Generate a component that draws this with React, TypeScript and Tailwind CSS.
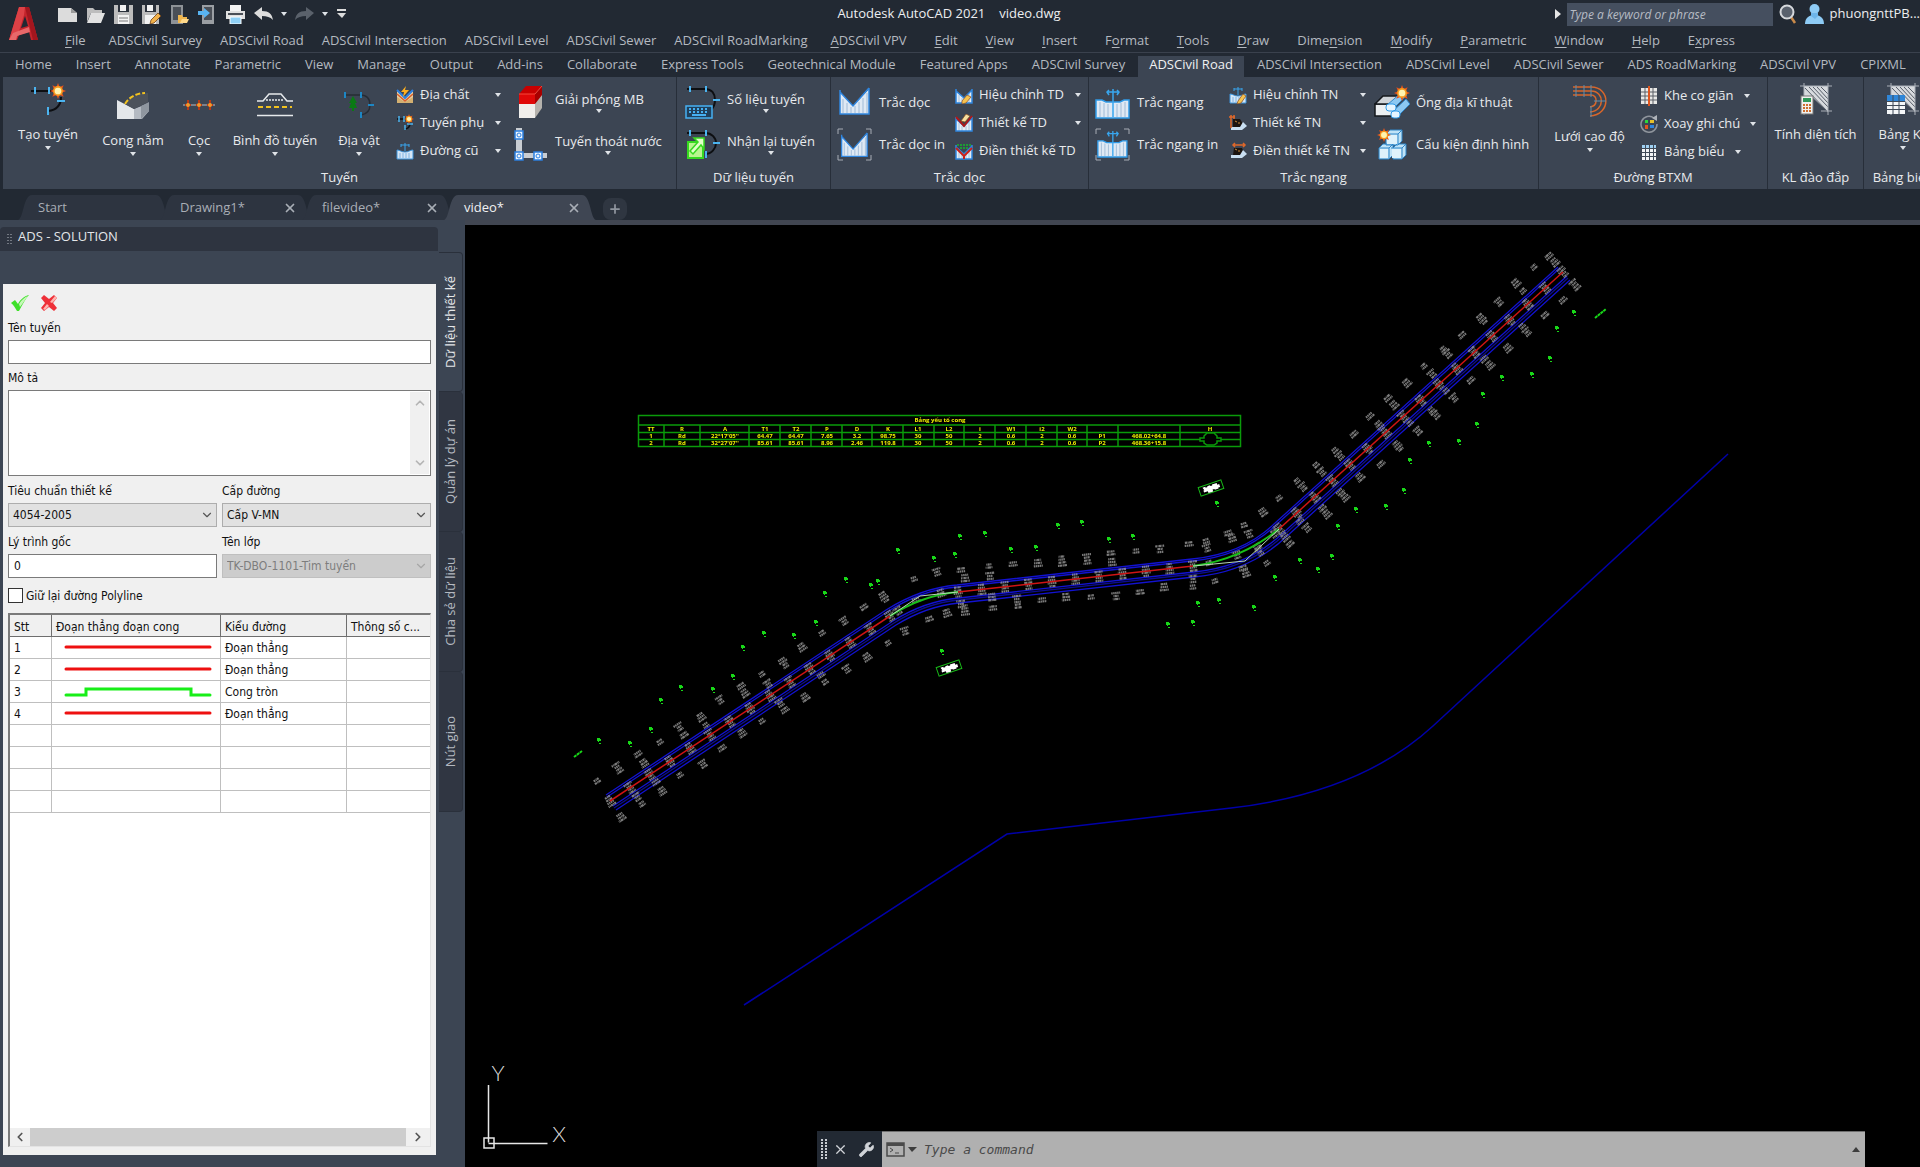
import type { ReactNode } from 'react';
import { ChevronDown, ChevronUp, ChevronLeft, ChevronRight, Plus, Wrench, X } from 'lucide-react';

const MENUS = [
  '&File', 'ADSCivil Survey', 'ADSCivil Road', 'ADSCivil Intersection', 'ADSCivil Level', 'ADSCivil Sewer',
  'ADSCivil RoadMarking', '&ADSCivil VPV', '&Edit', '&View', '&Insert', 'F&ormat', '&Tools', '&Draw',
  'Dime&nsion', '&Modify', '&Parametric', '&Window', '&Help', 'E&xpress',
];

const TABS = [
  'Home', 'Insert', 'Annotate', 'Parametric', 'View', 'Manage', 'Output', 'Add-ins', 'Collaborate',
  'Express Tools', 'Geotechnical Module', 'Featured Apps', 'ADSCivil Survey', 'ADSCivil Road',
  'ADSCivil Intersection', 'ADSCivil Level', 'ADSCivil Sewer', 'ADS RoadMarking', 'ADSCivil VPV', 'CPIXML',
];

const FILES = ['Start', 'Drawing1*', 'filevideo*', 'video*'];
const SIDE_TABS = ['Dữ liệu thiết kế', 'Quản lý dự án', 'Chia sẻ dữ liệu', 'Nút giao'];

const SEGMENTS = [
  { id: '1', type: 'Đoạn thẳng', curve: false },
  { id: '2', type: 'Đoạn thẳng', curve: false },
  { id: '3', type: 'Cong tròn', curve: true },
  { id: '4', type: 'Đoạn thẳng', curve: false },
];

/* ---------- icons ---------- */

function Svg({ w, h, children }: { w: number; h: number; children: ReactNode }) {
  return (
    <svg width={w} height={h} viewBox={`0 0 ${w} ${h}`} fill="none" className="shrink-0" aria-hidden="true">
      {children}
    </svg>
  );
}

function Sun({ x, y, r }: { x: number; y: number; r: number }) {
  const rays = [0, 45, 90, 135, 180, 225, 270, 315];
  return (
    <g transform={`translate(${x} ${y})`}>
      {rays.map((a) => (
        <path key={a} d={`M${-r * 0.4} 0L0 ${-r}L${r * 0.4} 0z`} fill="#e8541c" transform={`rotate(${a})`} />
      ))}
      <circle r={r * 0.62} fill="#f59a1c" />
      <circle r={r * 0.42} fill="#fff3b0" />
    </g>
  );
}

function Arrow({ className = '' }: { className?: string }) {
  return (
    <svg width="6" height="4" viewBox="0 0 6 4" className={`shrink-0 ${className}`} aria-hidden="true">
      <path d="M0 0h6L3 4z" fill="#dfe3e8" />
    </svg>
  );
}

function AlignIcon() {
  return (
    <Svg w={36} h={34}>
      <path d="M1 9h22M31 15c0 8-4 13-13 14" stroke="#0d0f12" strokeWidth="2" />
      <path d="M5 5v7M19 5v7M18 25v8M27 19h8" stroke="#4bb4f0" strokeWidth="2" />
      <Sun x={28} y={9} r={8} />
    </Svg>
  );
}

function CurveIcon() {
  return (
    <Svg w={34} h={28}>
      <path d="M1 9l17 9v10H1z" fill="#e4e7ea" />
      <path d="M18 18L33 12v8l-7 8h-8z" fill="#b4bac2" />
      <path d="M25 28V15l8-4v9z" fill="#8f969f" />
      <path d="M9 13C14 6 24 2 32 2v9l-14 7z" fill="#4c525b" />
      <path d="M9 13C13 6 21 2 29 2" stroke="#f2c21f" strokeWidth="2" strokeDasharray="5 2" />
    </Svg>
  );
}

function StakeIcon() {
  return (
    <Svg w={34} h={12}>
      <path d="M1 6h32" stroke="#b9bdc4" />
      {[6, 17, 28].map((x) => (
        <g key={x}>
          <path d={`M${x} 1v10M${x - 3} 6h6`} stroke="#b83a18" strokeWidth="2" />
          <circle cx={x} cy={6} r={2} fill="#f29a2c" />
        </g>
      ))}
    </Svg>
  );
}

function PlanIcon() {
  return (
    <Svg w={38} h={24}>
      <path d="M1 8h6l6-7h12l6 7h6M1 22.500h36" stroke="#e6e9ec" strokeWidth="1.500" />
      <path d="M10 7h18" stroke="#e6e9ec" strokeWidth="1.500" strokeDasharray="2 1" />
      <path d="M2 14h34" stroke="#f2c21f" strokeWidth="2" strokeDasharray="5 3" />
    </Svg>
  );
}

function FeatureIcon() {
  return (
    <Svg w={34} h={28}>
      <path d="M2 4h16c8 0 10 5 10 10 0 6-3 9-9 10" stroke="#262c35" strokeWidth="1.500" />
      <path d="M3 1v6M19 1v6M26 14h6M19 21v6" stroke="#1d86c4" strokeWidth="2" />
      <path d="M11 5l4 7h-2l2 5h-3v3h-2v-3H7l2-5H7z" fill="#0a7a14" />
    </Svg>
  );
}

function GeoIcon() {
  return (
    <Svg w={18} h={18}>
      <path d="M1 5l8 7 8-7v12H1z" fill="#e6d3a6" />
      <path d="M1 11l8 5 8-5v6H1z" fill="#d3b071" />
      <path d="M1 4l8 8 8-8" stroke="#2d7fe0" strokeWidth="2" />
      <path d="M1 8l8 7 8-7" stroke="#d85c2a" strokeWidth="1.500" />
      <path d="M10 0L5 6h3l-1 5 6-7h-4z" fill="#ffb01f" />
    </Svg>
  );
}

function SubRouteIcon() {
  return (
    <Svg w={18} h={18}>
      <path d="M1 5h9M14 9c0 4-2 6-6 6" stroke="#0d0f12" strokeWidth="1.500" />
      <path d="M3 2v6M8 2v6M9 11v5M11 10h6" stroke="#4bb4f0" strokeWidth="1.500" />
      <Sun x={13} y={5} r={5} />
    </Svg>
  );
}

function Section({ pencil = false }: { pencil?: boolean }) {
  return (
    <Svg w={18} h={18}>
      <path d="M1 8c3 0 4 2 8 2s5-2 8-2v9H1z" fill="#d5e6f6" stroke="#3d95dc" />
      <path d="M4 11v5M7 11v5M10 11v5M13 11v5" stroke="#7fb4e4" />
      <path d="M9 1v8M5 3h8M5 2v3M13 2v3" stroke="#38a6ee" />
      {pencil && <path d="M9 15l5-7 3 2-5 7-4 1z" fill="#f6c350" stroke="#8a4b1c" strokeWidth=".7" />}
    </Svg>
  );
}

function ClearIcon() {
  return (
    <Svg w={26} h={34}>
      <path d="M1 18h16v15H1z" fill="#f0eeeb" />
      <path d="M17 18l7-9v14l-7 10z" fill="#b5b2ad" />
      <path d="M1 9h16v10H1z" fill="#e00808" />
      <path d="M1 9l7-8h16l-7 8z" fill="#c80000" />
      <path d="M17 9l7-8v9l-7 9z" fill="#a80000" />
      <path d="M1 9h16l7-8" stroke="#ff5a4a" strokeWidth=".8" />
    </Svg>
  );
}

function DrainIcon() {
  return (
    <Svg w={34} h={34}>
      <path d="M2 1h6v26H2z" fill="#c9cdd2" />
      <path d="M6 26h27v5H6z" fill="#c9cdd2" />
      {[[1, 4], [1, 25], [20, 25]].map(([x, y]) => (
        <g key={`${x}-${y}`}>
          <rect x={x} y={y} width="8" height="8" fill="#eef6ff" stroke="#2b7fe0" strokeWidth="1.500" />
          <circle cx={x + 4} cy={y + 4} r="2" stroke="#2b7fe0" />
        </g>
      ))}
    </Svg>
  );
}

function DataIcon() {
  return (
    <Svg w={36} h={34}>
      <path d="M2 4h18c7 0 10 5 10 11 0 5-2 8-4 10" stroke="#0d0f12" strokeWidth="2" />
      <path d="M5 1v6M21 1v6M28 15h7" stroke="#4bb4f0" strokeWidth="2" />
      <rect x="1" y="21" width="26" height="12" fill="#20405c" stroke="#46b0f2" strokeWidth="1.500" />
      <path d="M4 24h20M4 27h20" stroke="#46b0f2" strokeWidth="2" strokeDasharray="2 2" />
      <path d="M7 30h14" stroke="#46b0f2" strokeWidth="2" />
    </Svg>
  );
}

function GetBackIcon() {
  return (
    <Svg w={36} h={32}>
      <path d="M2 5h18c7 0 11 5 11 10s-4 11-11 11" stroke="#0d0f12" strokeWidth="2" />
      <path d="M5 2v6M21 2v6M28 15h7M21 23v7" stroke="#4bb4f0" strokeWidth="2" />
      <path d="M3 14h15v16H3z" fill="#b9f58f" stroke="#36d820" strokeWidth="2" />
      <path d="M9 10h10v11l-3-4-8 9-3-3 8-9z" fill="#e2ffc8" stroke="#36d820" strokeWidth="1.500" />
    </Svg>
  );
}

function ProfileShape({ top }: { top: number }) {
  return (
    <>
      <path d={`M3 ${top + 4}l13 14 16-17v25H3z`} fill="#dfe9f4" />
      <path d="M6 12v14M10 16v10M14 20v6M18 19v7M22 15v11M26 11v15M30 6v20" stroke="#9fbad6" />
      <path d={`M3 ${top + 2}v24h29V${top}M3 ${top + 4}l13 14L32 ${top}`} stroke="#2f86e0" strokeWidth="1.500" />
    </>
  );
}

function Corners() {
  return <path d="M1 6V1h5M29 1h5v5M34 27v5h-5M6 32H1v-5" stroke="#a7adb6" />;
}

function ProfileIcon({ framed = false }: { framed?: boolean }) {
  return (
    <Svg w={36} h={33}>
      <g transform={framed ? 'translate(2 4) scale(.88 .9)' : 'translate(0 1)'}>
        <ProfileShape top={1} />
      </g>
      {framed && <Corners />}
    </Svg>
  );
}

function CrossIcon({ framed = false }: { framed?: boolean }) {
  return (
    <Svg w={36} h={33}>
      <g transform={framed ? 'translate(2 2) scale(.88 .9)' : 'translate(0 2)'}>
        <path d="M1 12h6l4 2h14l4-2h5v18H1z" fill="#dfe9f4" />
        <path d="M5 14v15M9 15v14M13 16v13M22 16v13M26 15v14M30 14v15" stroke="#9fbad6" />
        <path d="M1 12h6l4 2h14l4-2h5v18H1z" stroke="#2f9ae8" strokeWidth="1.500" />
        <path d="M18 1v28M12 4h12M14 2l-2 2 2 3M22 2l2 2-2 3" stroke="#38a6ee" strokeWidth="1.500" />
      </g>
      {framed && <Corners />}
    </Svg>
  );
}

function SmallProfile({ kind }: { kind: 'edit' | 'design' | 'fill' }) {
  return (
    <Svg w={18} h={18}>
      <path d="M1 5l8 7 8-8v13H1z" fill="#e4edf6" />
      <path d="M4 9v8M7 12v5M11 12v5M14 8v9" stroke="#a9c0d8" />
      <path d="M1 3v14h16V3M1 5l8 7 8-8" stroke="#2f86e0" strokeWidth="1.500" />
      {kind === 'edit' && <path d="M7 15l5-6 4 2-5 6-4 1z" fill="#f6c350" stroke="#8a4b1c" strokeWidth=".7" />}
      {kind === 'design' && (
        <>
          <path d="M1 3l8 9 8-10" stroke="#b01818" strokeWidth="2" />
          <path d="M6 7l5-7 4 2-5 6z" fill="#f6e0a0" stroke="#8a4b1c" strokeWidth=".7" />
        </>
      )}
      {kind === 'fill' && (
        <>
          <path d="M1 6l8 8 8-8M9 14v3" stroke="#c8201a" strokeWidth="2" />
          <path d="M2 3h14M5 6h8" stroke="#1d9a35" strokeWidth="2" strokeDasharray="2 1" />
        </>
      )}
    </Svg>
  );
}

function SmallCross({ fill = false }: { fill?: boolean }) {
  return (
    <Svg w={18} h={18}>
      <path d={fill ? 'M5 6h8l2 5-3 2H4z' : 'M4 5h7l3 5-2 3H4z'} fill="#1b1410" />
      <path d="M6 7l2 1M9 9h2" stroke="#c98a3c" />
      <path d="M2 13h9l3-5 4 4-5 4H2z" fill="#c9dff2" />
      {fill ? (
        <path d="M4 3h12M6 1L4 3l2 2M14 1l2 2-2 2" stroke="#e0682a" strokeWidth="1.500" />
      ) : (
        <path d="M2 1v13M0 3h6M5 1v4" stroke="#e0682a" strokeWidth="1.500" />
      )}
    </Svg>
  );
}

function DuctIcon() {
  return (
    <Svg w={36} h={34}>
      <path d="M1 19h18v12H1z" fill="#eceff1" stroke="#15181c" strokeWidth="1.500" />
      <path d="M1 19l8-8h18l-8 8z" fill="#d0d4d8" stroke="#15181c" strokeWidth="1.500" />
      <path d="M13 20l14-12 6 2-13 13zM18 27l14-13 4 5-12 12z" fill="#8cc8f2" stroke="#2f86c8" />
      <rect x="12" y="19" width="10" height="7" rx="3" fill="#e4f4ff" stroke="#2f9ae8" />
      <rect x="17" y="26" width="9" height="7" rx="3" fill="#e4f4ff" stroke="#2f9ae8" />
      <Sun x={28} y={8} r={8} />
    </Svg>
  );
}

function BlocksIcon() {
  return (
    <Svg w={30} h={34}>
      <g stroke="#2f86c8" fill="#bfe3f7">
        <path d="M9 7l4-4h12v11l-4 4H9zM2 21l4-4h10v11l-4 4H2zM16 21l4-4h9v11l-4 4h-9z" />
        <path d="M9 7h12v11M21 7l4-4M2 21h10v11M12 21l4-4M14 21h11v11M25 21l4-4" />
      </g>
      <path d="M10 8h10v9H10zM3 22h8v9H3zM15 22h9v9h-9z" fill="#dff2fb" />
      <Sun x={7} y={8} r={7} />
    </Svg>
  );
}

function GridHeightIcon() {
  return (
    <Svg w={36} h={32}>
      <path
        d="M1 2h18c20 0 20 28-1 29M1 6h18c14 0 14 20-1 21M1 10h18c7 0 7 11-1 12"
        stroke="#d9662a"
        strokeWidth="1.500"
      />
      <path d="M4 0v12M12 0v12M19 0v12M22 16h12M19 21v11" stroke="#5d8fb0" />
    </Svg>
  );
}

function JointIcon() {
  return (
    <Svg w={18} h={20}>
      <path d="M1 2h16v16H1z" fill="#e8e8e6" />
      <path d="M1 6h16M1 10h16M1 14h16M5 2v16M13 2v16" stroke="#5b5f66" />
      <path d="M9 0v20" stroke="#e0561e" strokeWidth="2" />
    </Svg>
  );
}

function RotateIcon() {
  return (
    <Svg w={18} h={18}>
      <path d="M14 3a8 8 0 1 0 3 6" stroke="#8f959d" strokeWidth="1.500" />
      <path d="M12 3l5-3v6z" fill="#aeb3ba" />
      <path d="M5 5h3v3H5z" fill="#2ad83a" />
      <path d="M10 5h4v3h-4z" fill="#e6c12a" />
      <path d="M5 10h3v4H5z" fill="#e0561e" />
      <path d="M10 10h4v3h-4z" fill="#2f86e0" />
    </Svg>
  );
}

function TableIcon() {
  return (
    <Svg w={18} h={18}>
      <path d="M2 2h14v15H2z" fill="#f2f4f6" />
      <path d="M2 2h14v3H2z" fill="#9fd0f2" />
      <path d="M2 5.500h14M2 9.500h14M2 13.500h14M5.500 2v15M9.500 2v15M13.500 2v15" stroke="#3f4a58" />
    </Svg>
  );
}

function AreaIcon({ table = false }: { table?: boolean }) {
  return (
    <Svg w={34} h={34}>
      <path d="M5 4h24v26L12 14H5z" fill="#d7dade" />
      <path d="M6 6l22 23M10 5l19 20M14 5l15 16M18 5l11 12M22 5l7 7" stroke="#565d68" />
      <path d="M1 4h32M5 1v32M29 1v32M22 29h11" stroke="#aab0b8" />
      {table ? (
        <>
          <rect x="1" y="13" width="18" height="19" fill="#f4f6f8" />
          <rect x="1" y="13" width="18" height="6" fill="#2f86d8" />
          <path d="M1 19.500h18M1 23.500h18M1 27.500h18M7 13v19M13 13v19" stroke="#3f4a58" />
        </>
      ) : (
        <>
          <rect x="2" y="14" width="12" height="18" fill="#f1f1ef" stroke="#777" />
          <rect x="4" y="16" width="8" height="4" fill="#2f9a5a" />
          <path d="M4 23h8M4 26h8M4 29h8" stroke="#d07030" strokeWidth="2" strokeDasharray="2 1" />
        </>
      )}
    </Svg>
  );
}

function LogoA() {
  return (
    <svg width="32" height="36" viewBox="0 0 32 36" className="shrink-0" aria-hidden="true">
      <path fillRule="evenodd" d="M11 1h10l9 33h-7l-2-8-10 3-2 5H1zM17 10l-4 12 7-2z" fill="#c4242c" />
      <path d="M11 1h6l-1 8-4 13-4 12H1z" fill="#dd4146" />
      <path d="M5 27l16-6 1 5-13 4-1 4H1z" fill="#e8686a" />
      <path d="M17 1h4l9 33h-5z" fill="#a3161e" />
    </svg>
  );
}

/* ---------- title bar ---------- */

function QuickAccess() {
  return (
    <div className="flex items-center">
      <div className="flex items-center gap-[9px]">
        <button aria-label="New"><Svg w={19} h={19}><path d="M0 3h13l6 5v9H0z" fill="#dcdcdc" /><path d="M13 3v5h6z" fill="#9a9a9a" /></Svg></button>
        <button aria-label="Open"><Svg w={19} h={19}><path d="M1 17V3h6l2 2h7v3H5z" fill="#bdbdbd" /><path d="M5 8h14l-4 10H1z" fill="#e2e2e2" /></Svg></button>
        <button aria-label="Save"><Svg w={19} h={19}><path d="M0 0h19v19H0z" fill="#bcbcbc" /><path d="M4 0h11v7H4z" fill="#2b313b" /><path d="M6 0h6v6H6zM4 10h11v9H4z" fill="#f2f2f2" /><path d="M5 13h9M5 16h9" stroke="#7a7a7a" /></Svg></button>
        <button aria-label="Save As"><Svg w={19} h={19}><path d="M0 0h17v19H0z" fill="#bcbcbc" /><path d="M3 0h11v7H3z" fill="#2b313b" /><path d="M5 0h6v6H5zM3 10h11v9H3z" fill="#f2f2f2" /><path d="M8 19l1-4 7-7 3 3-7 7z" fill="#f2b24a" stroke="#6b3d17" strokeWidth=".8" /></Svg></button>
        <button aria-label="Open from mobile"><Svg w={19} h={19}><path d="M1 0h12v19H1z" fill="#8e9297" /><path d="M3 2h8v13H3z" fill="#4a4f57" /><path d="M8 18v-8h4l1 2h4v6z" fill="#f0b64e" /><path d="M10 18l2-4h7l-2 4z" fill="#ffd98a" /></Svg></button>
        <button aria-label="Save to mobile"><Svg w={19} h={19}><path d="M4 0h12v19H4z" fill="#9a9ea3" /><path d="M6 2h8v13H6z" fill="#4a4f57" /><path d="M0 6h6V3l6 5-6 5v-3H0z" fill="#58b4f2" /></Svg></button>
        <button aria-label="Plot"><Svg w={19} h={19}><path d="M4 0h11v6H4z" fill="#f4f4f4" /><path d="M0 6h19v8H0z" fill="#e0e0e0" /><path d="M2 9h15" stroke="#4a4f57" strokeWidth="2" /><path d="M4 12h11v7H4z" fill="#8fd0f6" stroke="#fff" /></Svg></button>
        <button aria-label="Undo"><Svg w={19} h={19}><path d="M0 8l8-6v4c7 0 10 3 11 9-3-3-6-4-11-4v4z" fill="#dcdcdc" /></Svg></button>
      </div>
      <Arrow className="mx-2" />
      <button aria-label="Redo"><Svg w={19} h={19}><path d="M19 8l-8-6v4C4 6 1 9 0 15c3-3 6-4 11-4v4z" fill="#5a616b" /></Svg></button>
      <Arrow className="mx-2" />
      <button aria-label="Customize">
        <Svg w={11} h={12}><path d="M1 2h9" stroke="#dcdcdc" strokeWidth="2" /><path d="M1 5h9l-4 5z" fill="#dcdcdc" /></Svg>
      </button>
    </div>
  );
}

function Mnemonic({ text }: { text: string }) {
  const at = text.indexOf('&');
  if (at < 0) return <>{text}</>;
  return (
    <>
      {text.slice(0, at)}
      <span className="underline underline-offset-2">{text[at + 1]}</span>
      {text.slice(at + 2)}
    </>
  );
}

function TitleBar() {
  return (
    <header className="flex shrink-0 border-b border-[#3a414d] bg-[#222933]">
      <div className="w-[50px] shrink-0 pl-2 pt-[6px]"><LogoA /></div>
      <div className="min-w-0 flex-1">
        <div className="flex h-7 items-center">
          <div className="flex-1 pl-2"><QuickAccess /></div>
          <div className="flex gap-[14px] whitespace-pre pr-20 text-[13px] text-[#eceef0]">
            <span>Autodesk AutoCAD 2021</span>
            <span>video.dwg</span>
          </div>
          <div className="flex flex-1 items-center justify-end overflow-hidden">
            <svg width="6" height="10" viewBox="0 0 6 10" className="mr-[6px]" aria-hidden="true"><path d="M0 0l6 5-6 5z" fill="#e6e6e6" /></svg>
            <input
              aria-label="Search"
              placeholder="Type a keyword or phrase"
              className="h-[23px] w-[206px] bg-[#454f5f] px-[3px] text-[12px] italic text-white placeholder-[#b7bcc4] outline-none"
            />
            <button aria-label="Find" className="ml-[6px]">
              <Svg w={18} h={20}><path d="M12 13l4 6" stroke="#c98a4a" strokeWidth="2.500" /><circle cx="8" cy="8" r="6.500" fill="#59616d" stroke="#d6d9dd" strokeWidth="2" /></Svg>
            </button>
            <a href="#account" className="ml-2 flex items-center gap-[6px] text-[13px] text-[#eceef0]">
              <Svg w={19} h={20}><circle cx="9.500" cy="5" r="5" fill="#8ecbf5" /><path d="M0 20c0-6 4-9 9.500-9S19 14 19 20z" fill="#8ecbf5" /><path d="M6 9h7v3l-3 3-4-3z" fill="#6db5ea" /></Svg>
              phuongnttPB...
            </a>
          </div>
        </div>
        <nav className="flex h-6 items-center overflow-hidden whitespace-nowrap pl-px pt-px text-[13px] text-[#b4b9c0]">
          {MENUS.map((m) => (
            <button key={m} className={m.startsWith('ADS') ? 'px-[9px]' : 'px-[14px]'}><Mnemonic text={m} /></button>
          ))}
        </nav>
      </div>
    </header>
  );
}

/* ---------- ribbon ---------- */

function Tall({ icon, label, className, arrow = true }: { icon: ReactNode; label: string; className: string; arrow?: boolean }) {
  return (
    <button className={`flex shrink-0 flex-col items-center ${className}`}>
      <span className="flex h-9 items-center">{icon}</span>
      <span className="mt-2 whitespace-nowrap leading-[18px]">{label}</span>
      {arrow && <Arrow className="mt-[3px]" />}
    </button>
  );
}

function Wide({ icon, label, arrow = false }: { icon: ReactNode; label: string; arrow?: boolean }) {
  return (
    <button className="flex h-[42px] items-center gap-[6px] whitespace-nowrap">
      <span className="flex w-9 justify-center">{icon}</span>
      <span className="flex flex-col items-center">
        <span className="leading-[18px]">{label}</span>
        {arrow && <Arrow className="mb-px mt-px" />}
      </span>
    </button>
  );
}

function Small({ icon, label, arrow = true, tight = false }: { icon: ReactNode; label: string; arrow?: boolean; tight?: boolean }) {
  return (
    <button className="flex h-7 w-full items-center gap-[6px] whitespace-nowrap">
      {icon}
      <span>{label}</span>
      {arrow && <Arrow className={tight ? 'ml-1' : 'ml-auto'} />}
    </button>
  );
}

function Panel({ title, className, children }: { title: string; className: string; children: ReactNode }) {
  return (
    <section className={`flex shrink-0 flex-col border-r border-[#272e39] ${className}`}>
      <div className="flex h-[90px] pt-1">{children}</div>
      <h2 className="flex h-[22px] items-center justify-center whitespace-nowrap">{title}</h2>
    </section>
  );
}

function Ribbon() {
  return (
    <div className="shrink-0 bg-[#222933]">
      <div className="flex h-6 items-end gap-[2px] overflow-hidden whitespace-nowrap pl-1 text-[13px] text-[#b4b9c0]" role="tablist">
        {TABS.map((t) => {
          const active = t === 'ADSCivil Road';
          return (
            <button
              key={t}
              role="tab"
              aria-selected={active}
              className={`h-[21px] px-[11px] pb-[4px] leading-[17px] ${active ? 'bg-[#3c4553] text-[#f0f1f2]' : ''}`}
            >
              {t}
            </button>
          );
        })}
      </div>
      <div className="ml-[3px] flex overflow-hidden bg-[#3c4553] text-[13px] text-[#e8eaed]">
        <Panel title="Tuyến" className="w-[674px]">
          <Tall className="w-[90px]" icon={<AlignIcon />} label="Tạo tuyến" />
          <Tall className="w-20 pt-[6px]" icon={<CurveIcon />} label="Cong nằm" />
          <Tall className="w-[52px] pt-[6px]" icon={<StakeIcon />} label="Cọc" />
          <Tall className="w-[100px] pt-[6px]" icon={<PlanIcon />} label="Bình đồ tuyến" />
          <Tall className="w-[68px] pt-[6px]" icon={<FeatureIcon />} label="Địa vật" />
          <div className="w-[108px] shrink-0 pl-[3px]">
            <Small icon={<GeoIcon />} label="Địa chất" />
            <Small icon={<SubRouteIcon />} label="Tuyến phụ" />
            <Small icon={<Section />} label="Đường cũ" />
          </div>
          <div className="pl-3">
            <Wide icon={<ClearIcon />} label="Giải phóng MB" arrow />
            <Wide icon={<DrainIcon />} label="Tuyến thoát nước" arrow />
          </div>
        </Panel>
        <Panel title="Dữ liệu tuyến" className="w-[154px]">
          <div className="pl-2">
            <Wide icon={<DataIcon />} label="Số liệu tuyến" arrow />
            <Wide icon={<GetBackIcon />} label="Nhận lại tuyến" arrow />
          </div>
        </Panel>
        <Panel title="Trắc dọc" className="w-[258px]">
          <div className="w-[124px] shrink-0 pl-[6px]">
            <Wide icon={<ProfileIcon />} label="Trắc dọc" />
            <Wide icon={<ProfileIcon framed />} label="Trắc dọc in" />
          </div>
          <div className="w-[126px] shrink-0">
            <Small icon={<SmallProfile kind="edit" />} label="Hiệu chỉnh TD" />
            <Small icon={<SmallProfile kind="design" />} label="Thiết kế TD" />
            <Small icon={<SmallProfile kind="fill" />} label="Điền thiết kế TD" arrow={false} />
          </div>
        </Panel>
        <Panel title="Trắc ngang" className="w-[450px]">
          <div className="w-[140px] shrink-0 pl-[6px]">
            <Wide icon={<CrossIcon />} label="Trắc ngang" />
            <Wide icon={<CrossIcon framed />} label="Trắc ngang in" />
          </div>
          <div className="w-[137px] shrink-0">
            <Small icon={<Section pencil />} label="Hiệu chỉnh TN" />
            <Small icon={<SmallCross />} label="Thiết kế TN" />
            <Small icon={<SmallCross fill />} label="Điền thiết kế TN" />
          </div>
          <div className="pl-2">
            <Wide icon={<DuctIcon />} label="Ống địa kĩ thuật" />
            <Wide icon={<BlocksIcon />} label="Cấu kiện định hình" />
          </div>
        </Panel>
        <Panel title="Đường BTXM" className="w-[229px]">
          <Tall className="w-[101px] pt-[2px]" icon={<GridHeightIcon />} label="Lưới cao độ" />
          <div className="pt-px">
            <Small tight icon={<JointIcon />} label="Khe co giãn" />
            <Small tight icon={<RotateIcon />} label="Xoay ghi chú" />
            <Small tight icon={<TableIcon />} label="Bảng biểu" />
          </div>
        </Panel>
        <Panel title="KL đào đắp" className="w-24">
          <Tall className="w-full" icon={<AreaIcon />} label="Tính diện tích" arrow={false} />
        </Panel>
        <Panel title="Bảng biểu" className="w-[79px]">
          <Tall className="w-full" icon={<AreaIcon table />} label="Bảng KL" />
        </Panel>
      </div>
    </div>
  );
}

function FileTabs() {
  return (
    <div className="flex h-[31px] shrink-0 items-end bg-[#222933] pl-[18px] text-[13px]">
      {FILES.map((name) => {
        const active = name === 'video*';
        return (
          <div key={name} className={`relative flex h-[25px] w-[142px] items-center pl-5 pr-[5px] pt-px ${active ? 'text-[#f0f1f2]' : 'text-[#a9aeb6]'}`}>
            <svg viewBox="0 0 154 25" className="absolute inset-0 h-full w-[154px]" preserveAspectRatio="none" aria-hidden="true">
              <path d="M0 25c6-2 5-25 14-25h124c9 0 8 23 14 25z" fill={active ? '#3f4653' : '#2d3440'} />
            </svg>
            <button className="relative">{name}</button>
            {name !== 'Start' && (
              <button aria-label={`Close ${name}`} className="relative ml-auto"><X size={14} strokeWidth={3} color="#a9aeb6" /></button>
            )}
          </div>
        );
      })}
      <button aria-label="New tab" className="relative ml-[17px] flex h-[22px] w-6 items-center justify-center rounded-lg bg-[#2f3641]">
        <Plus size={14} strokeWidth={3} color="#8f959e" />
      </button>
    </div>
  );
}

/* ---------- side palette ---------- */

function Select({ id, label, value, disabled = false }: { id: string; label: string; value: string; disabled?: boolean }) {
  return (
    <div className="min-w-0 flex-1">
      <label htmlFor={id} className="block h-[27px] leading-[30px]">{label}</label>
      <div className="relative">
        <select
          id={id}
          disabled={disabled}
          className={`h-6 w-full appearance-none border px-1 pt-px leading-[21px] opacity-100 ${disabled ? 'border-[#bfbfbf] bg-[#cccccc] text-[#7d7d7d]' : 'border-[#adadad] bg-[#e1e1e1]'}`}
        >
          <option>{value}</option>
        </select>
        <ChevronDown size={14} strokeWidth={2} color={disabled ? '#a6a6a6' : '#555'} className="pointer-events-none absolute right-[3px] top-[5px]" />
      </div>
    </div>
  );
}

function SegmentTable() {
  const empty = [5, 6, 7, 8];
  const cell = 'border-b border-r border-[#bfbfbf] last:border-r-0';
  return (
    <div className="flex min-h-0 flex-1 flex-col border-b border-l-2 border-r border-t-2 border-b-[#e3e3e3] border-l-[#7a7a7a] border-r-[#e3e3e3] border-t-[#7a7a7a] bg-white">
      <table className="w-full table-fixed border-separate border-spacing-0 text-left">
        <colgroup>
          <col className="w-[42px]" />
          <col className="w-[169px]" />
          <col className="w-[126px]" />
          <col />
        </colgroup>
        <thead>
          <tr>
            {['Stt', 'Đoạn thẳng đoạn cong', 'Kiểu đường', 'Thông số c...'].map((h) => (
              <th key={h} className="h-[22px] overflow-hidden whitespace-nowrap border-b border-r border-[#6e6e6e] bg-[#f0f0f0] px-1 pt-1 font-normal leading-[17px] last:border-r-0">{h}</th>
            ))}
          </tr>
        </thead>
        <tbody>
          {SEGMENTS.map((s) => (
            <tr key={s.id}>
              <td className={`h-[22px] px-1 pt-[2px] leading-[19px] ${cell}`}>{s.id}</td>
              <td className={`px-3 ${cell}`}>
                <svg width="148" height="12" viewBox="0 0 148 12" className="block" fill="none" strokeWidth="3" strokeLinecap="round" aria-hidden="true">
                  {s.curve ? <path d="M2 9h20V3h105v6h19" stroke="#18ee18" /> : <path d="M2 5h144" stroke="#ee1010" />}
                </svg>
              </td>
              <td className={`px-1 pt-[2px] leading-[19px] ${cell}`}>{s.type}</td>
              <td className={cell} />
            </tr>
          ))}
          {empty.map((n) => (
            <tr key={n}>
              <td className={`h-[22px] ${cell}`} />
              <td className={cell} />
              <td className={cell} />
              <td className={cell} />
            </tr>
          ))}
        </tbody>
      </table>
      <div className="mt-auto flex h-[18px] bg-[#f0f0f0]">
        <button type="button" aria-label="Scroll left" className="flex w-5 items-center justify-center"><ChevronLeft size={14} strokeWidth={3} color="#555" /></button>
        <div className="flex-1 bg-[#cdcdcd]" />
        <button type="button" aria-label="Scroll right" className="flex w-6 items-center justify-center"><ChevronRight size={14} strokeWidth={3} color="#555" /></button>
      </div>
    </div>
  );
}

function Palette() {
  return (
    <aside className="flex w-[465px] shrink-0 bg-[#3c4553]">
      <div className="flex w-[438px] shrink-0 flex-col pb-3 pt-[7px]">
        <div className="flex h-6 items-center gap-[6px] rounded-t bg-[#2e3440] pl-[7px] text-[13px] text-[#e4e6e9]">
          <Svg w={5} h={12}><path d="M1 1v11M4 1v11" stroke="#b9bdc4" strokeDasharray="1 2" /></Svg>
          <h1 className="pb-1">ADS - SOLUTION</h1>
        </div>
        <form className="ml-[3px] mr-[2px] mt-[33px] flex min-h-0 flex-1 flex-col bg-[#f0f0f0] px-[5px] pb-2 pt-[7px] font-['DejaVu_Sans_Condensed','DejaVu_Sans',sans-serif] text-[12px] text-[#111]">
          <div className="flex h-6 items-center gap-[10px] pl-[2px]">
            <button type="button" aria-label="Accept">
              <Svg w={20} h={18}><path d="M1 9l4-3 3 4c2-4 6-8 11-9-4 4-6 9-10 16H7C5 14 4 11 1 9z" fill="#3fe02a" /><path d="M9 10c2-4 6-7 9-8-3 4-5 7-8 11z" fill="#c6f8b8" /></Svg>
            </button>
            <button type="button" aria-label="Cancel">
              <Svg w={18} h={18}><path d="M1 4l3-3 5 4 5-4 3 3-4 5 4 5-3 3-5-4-5 4-3-3 4-5z" fill="#ee3038" /><path d="M10 8l5-6 2 2-5 5zM3 15l4-5 2 2-4 4z" fill="#ffb4b0" /></Svg>
            </button>
          </div>
          <label htmlFor="route-name" className="h-[25px] leading-[26px]">Tên tuyến</label>
          <input id="route-name" className="h-6 shrink-0 border border-[#7a7a7a] bg-white px-1 outline-none" />
          <label htmlFor="route-note" className="h-[26px] leading-[28px]">Mô tả</label>
          <div className="flex h-[86px] shrink-0 border border-[#7a7a7a] bg-white">
            <textarea id="route-note" className="flex-1 resize-none p-1 outline-none" />
            <div className="m-px flex w-[19px] flex-col items-center justify-between bg-[#f0f0f0] py-1">
              <ChevronUp size={14} strokeWidth={3} color="#b5b5b5" />
              <ChevronDown size={14} strokeWidth={3} color="#b5b5b5" />
            </div>
          </div>
          <div className="flex gap-[5px]">
            <Select id="standard" label="Tiêu chuẩn thiết kế" value="4054-2005" />
            <Select id="grade" label="Cấp đường" value="Cấp V-MN" />
          </div>
          <div className="flex gap-[5px]">
            <div className="min-w-0 flex-1">
              <label htmlFor="station" className="block h-[27px] leading-[30px]">Lý trình gốc</label>
              <input id="station" defaultValue="0" className="h-6 w-full border border-[#7a7a7a] bg-white px-[5px] outline-none" />
            </div>
            <Select id="layer" label="Tên lớp" value="TK-DBO-1101-Tim tuyến" disabled />
          </div>
          <div className="flex h-[35px] items-center gap-[3px]">
            <input id="keep" type="checkbox" className="h-[15px] w-[15px] appearance-none border border-[#333] bg-white" />
            <label htmlFor="keep">Giữ lại đường Polyline</label>
          </div>
          <SegmentTable />
        </form>
      </div>
      <div className="flex w-6 flex-col pl-px pt-8 text-[13px]" role="tablist" aria-orientation="vertical">
        {SIDE_TABS.map((t, i) => (
          <button
            key={t}
            role="tab"
            aria-selected={i === 0}
            className={`flex h-[140px] w-6 items-center justify-center rounded-r border-b border-r border-[#2a303b] ${i === 0 ? 'border-t text-[#e4e6e9]' : 'bg-[#303642] text-[#b4b9c0]'}`}
          >
            <span className="rotate-180 whitespace-nowrap [writing-mode:vertical-rl]">{t}</span>
          </button>
        ))}
      </div>
    </aside>
  );
}

/* ---------- drawing ---------- */

type Pt = [number, number];

// centre line as straight legs joined by two curves
const LEGS: [Pt, Pt][] = [
  [[610, 801], [890, 616]],
  [[958, 592], [1193, 566]],
  [[1279, 529], [1563, 272]],
];
const KINKS: Pt[] = [[923, 595], [1245, 561]];

const TREES: Pt[] = [
  [599, 740], [630, 743], [651, 729], [661, 700], [681, 687], [713, 689], [733, 676], [743, 647], [764, 633],
  [794, 635], [816, 622], [825, 593], [846, 579], [871, 585], [878, 581], [898, 550], [934, 558], [955, 554],
  [960, 536], [985, 533], [1011, 549], [1036, 547], [1058, 525], [1082, 522], [1109, 539], [1133, 536],
  [1198, 603], [1168, 624], [1193, 622], [942, 651], [1574, 312], [1557, 328], [1550, 358], [1532, 374],
  [1502, 377], [1483, 394], [1477, 424], [1459, 441], [1429, 443], [1410, 460], [1404, 490], [1386, 506],
  [1356, 509], [1338, 526], [1332, 556], [1318, 569], [1300, 560], [1275, 577], [1254, 607], [1219, 600], [1217, 503],
];

const NOTES: Pt[] = [
  [597, 781], [618, 768], [638, 754], [644, 763], [660, 742], [679, 727], [684, 735], [701, 717], [706, 725],
  [720, 700], [741, 686], [745, 693], [762, 674], [768, 684], [784, 663], [802, 647], [822, 633], [844, 621],
  [864, 607], [884, 597], [914, 579], [937, 572], [961, 570], [965, 578], [989, 566], [990, 576], [1013, 564],
  [1038, 563], [1062, 561], [1087, 559], [1111, 553], [1112, 562], [1136, 551], [1160, 549], [1189, 544],
  [621, 817], [642, 804], [637, 797], [656, 782], [662, 791], [680, 775], [703, 764], [722, 748], [742, 733],
  [762, 721], [780, 703], [785, 710], [805, 697], [825, 682], [847, 669], [821, 675], [867, 657], [888, 643],
  [905, 631], [929, 619], [947, 613], [965, 610], [961, 604], [993, 608], [992, 597], [1018, 606], [1017, 599],
  [1042, 600], [1066, 597], [1091, 597], [1116, 596], [1140, 592], [1164, 587], [1193, 587], [1193, 579],
  [1549, 256], [1555, 262], [1534, 267], [1575, 285], [1563, 300], [1516, 283], [1523, 291], [1499, 302],
  [1545, 315], [1482, 319], [1522, 326], [1527, 332], [1462, 335], [1508, 348], [1443, 349], [1448, 354],
  [1484, 359], [1490, 365], [1424, 366], [1432, 374], [1471, 380], [1407, 383], [1446, 391], [1454, 398],
  [1388, 398], [1394, 405], [1431, 410], [1436, 415], [1370, 416], [1379, 425], [1410, 423], [1418, 431],
  [1354, 434], [1398, 446], [1335, 450], [1340, 456], [1381, 464], [1360, 477], [1316, 465], [1322, 472],
  [1340, 492], [1345, 497], [1297, 481], [1303, 487], [1322, 508], [1327, 514], [1279, 498], [1307, 528],
  [1300, 521], [1263, 512], [1244, 525], [1249, 534], [1228, 533], [1232, 538], [1206, 541], [1207, 548],
  [1290, 544], [1285, 537], [1267, 563], [1260, 552], [1243, 568], [1246, 573], [1215, 581],
  [898, 611], [916, 600], [941, 593], [1209, 563], [1237, 555], [1257, 546], [1275, 533],
];

const LARGE_NOTES = new Set([1, 14, 19, 28, 29, 56, 73, 79, 103]);

const COLUMNS = [664, 700, 749, 780, 811, 842, 872, 903, 934, 964, 995, 1026, 1057, 1087, 1118, 1180];
const CELLS: [number, string, string, string][] = [
  [651, 'TT', '1', '2'], [682, 'R', 'Rd', 'Rd'], [725, 'A', "22°17'05''", "32°27'07''"], [765, 'T1', '64.47', '85.61'],
  [796, 'T2', '64.47', '85.61'], [827, 'P', '7.65', '8.96'], [857, 'D', '3.2', '2.46'], [888, 'K', '98.75', '119.8'],
  [918, 'L1', '30', '30'], [949, 'L2', '50', '50'], [980, 'i', '2', '2'], [1011, 'W1', '0.6', '0.6'],
  [1042, 'i2', '2', '2'], [1072, 'W2', '0.6', '0.6'], [1102, '', 'P1', 'P2'], [1149, '', '468.02+64.8', '468.36+15.8'],
];

function angleAt([x]: Pt) {
  if (x < 900) return -33.5;
  if (x < 950) return -18;
  if (x < 1205) return -6;
  if (x < 1250) return -18;
  if (x < 1285) return -35;
  return -42;
}

function offsetPath(d: number) {
  const ends = LEGS.map(([a, b]) => {
    const len = Math.hypot(b[0] - a[0], b[1] - a[1]);
    const nx = (-(b[1] - a[1]) / len) * d;
    const ny = ((b[0] - a[0]) / len) * d;
    return [a[0] + nx, a[1] + ny, b[0] + nx, b[1] + ny].map(Math.round);
  });
  const [p, q, r] = ends;
  const k = KINKS.map(([x, y]) => `${x + Math.round(d * 0.35)} ${y + d}`);
  return `M${p[0]} ${p[1]}L${p[2]} ${p[3]}Q${k[0]} ${q[0]} ${q[1]}L${q[2]} ${q[3]}Q${k[1]} ${r[0]} ${r[1]}L${r[2]} ${r[3]}`;
}

function stations() {
  const out: { x: number; y: number; a: number }[] = [];
  LEGS.forEach(([a, b]) => {
    const len = Math.hypot(b[0] - a[0], b[1] - a[1]);
    const n = Math.round(len / 24.5);
    const deg = (Math.atan2(b[1] - a[1], b[0] - a[0]) * 180) / Math.PI;
    for (let i = 0; i <= n; i++) {
      out.push({ x: a[0] + ((b[0] - a[0]) * i) / n, y: a[1] + ((b[1] - a[1]) * i) / n, a: deg });
    }
  });
  return out;
}

// station text is far below reading size at this zoom, so it is drawn as hatch rows
function Note({ x, y, a, rows, n }: { x: number; y: number; a: number; rows: number; n: number }) {
  return (
    <g transform={`translate(${x} ${y}) rotate(${a})`}>
      {Array.from({ length: rows }, (_, i) => {
        const w = 6 + ((n * 7 + i * 5) % 4);
        return (
          <path
            key={i}
            d={`M${-w / 2} ${(i - (rows - 1) / 2) * 3}h${w}`}
            strokeDasharray={['2 .5 1 .4', '1 .4 3 .5', '1.5 .5'][(n + i) % 3]}
            strokeDashoffset={(n * 3 + i * 2) % 5}
          />
        );
      })}
    </g>
  );
}

function Drawing() {
  return (
    <svg className="absolute inset-0 h-full w-full" fill="none" role="img" aria-label="Model space">
      <g transform="translate(-465 -225)">
        <path d="M744 1005L1007 834L1231 808Q1360 793 1433 726L1728 454" stroke="#0000a8" strokeWidth="1.500" />
        <g stroke="#1212d0" strokeWidth="1.300">
          {[-7, -5, 6, 11].map((d) => <path key={d} d={offsetPath(d)} />)}
          <path d={offsetPath(8)} stroke="#0c0c90" />
        </g>
        <g stroke="#9a9a9a" strokeWidth="2.200" opacity=".8">
          {stations().map((s, i) => <Note key={i} x={s.x} y={s.y} a={s.a} rows={4} n={i} />)}
          {NOTES.map((p, i) => (
            <Note key={i} x={p[0]} y={p[1]} a={angleAt(p)} rows={LARGE_NOTES.has(i) ? 4 : 2 + (i % 2)} n={i} />
          ))}
        </g>
        {LEGS.map(([a, b]) => <path key={a[0]} d={`M${a[0]} ${a[1]}L${b[0]} ${b[1]}`} stroke="#d01414" strokeWidth="1.500" />)}
        <path d="M890 616Q923 595 958 592M1193 566Q1240 560 1279 529" stroke="#18c018" strokeWidth="2" />
        <path d="M890 616L920 596L958 592M1193 566L1245 561L1279 529" stroke="#b8d8b8" />
        <g fill="#18d818">
          {TREES.map(([x, y]) => <path key={`${x}-${y}`} d={`M${x - 2} ${y - 2}h3v1h1v2h-2v1h-1v-1h-1zM${x} ${y + 3}h2v1h-2z`} />)}
        </g>
        <path d="M574 757l8-6M1595 318l11-9" stroke="#18d818" strokeWidth="2" strokeDasharray="3 .6" />
        {[[1211, 488], [949, 668]].map(([x, y]) => (
          <g key={x} transform={`translate(${x} ${y}) rotate(-19)`}>
            <rect x="-12" y="-4.500" width="24" height="9" stroke="#18b818" />
            <path d="M-8 -3h3v1h2v-1h3v1h2v-1h5v2h2v3h-2v1h-4v-1h-2v2h-5v-2h-4v-2h1z" fill="#fff" />
          </g>
        ))}
        <g stroke="#0a9a0a" strokeWidth="1.500">
          <rect x="638.500" y="415.500" width="602" height="31" />
          <path d="M638 425h602M638 432.500h602M638 439.500h602" />
          {COLUMNS.map((x) => <path key={x} d={`M${x} 425v21`} />)}
          <path d="M1200 438h4v-2l3-3h7l3 3v2h4v3h-4v2l-3 2h-7l-3-2v-2h-4z" fill="#000" />
        </g>
        <g fill="#f2f200" fontSize="6" fontWeight="700" textAnchor="middle" fontFamily="Open Sans">
          <text x="940" y="422">Bảng yếu tố cong</text>
          <text x="1210" y="431">H</text>
          {CELLS.map(([x, a, b, c]) => (
            <g key={x}>
              <text x={x} y="431">{a}</text>
              <text x={x} y="438">{b}</text>
              <text x={x} y="445">{c}</text>
            </g>
          ))}
        </g>
      </g>
    </svg>
  );
}

function Ucs() {
  return (
    <svg width="90" height="104" viewBox="0 -10 90 104" className="absolute bottom-3 left-[15px]" fill="none" aria-hidden="true">
      <path d="M8.500 24v57.500M8.500 82.500h59" stroke="#e6e6e6" strokeWidth="1.500" />
      <rect x="4" y="77" width="10" height="10" stroke="#e6e6e6" strokeWidth="1.500" />
      <g fill="#d8d8d8" fontFamily="Lato" fontWeight="300" fontSize="22" textAnchor="middle">
        <text x="18" y="20">Y</text>
        <text x="79" y="81">X</text>
      </g>
    </svg>
  );
}

function CommandLine() {
  return (
    <div className="absolute bottom-0 left-[352px] right-[55px] flex h-9 bg-[#b0b0b0]">
      <div className="flex w-[65px] items-center gap-[6px] bg-[#222933] pl-1">
        <Svg w={6} h={22}><path d="M1 1v21M5 1v21" stroke="#c8ccd2" strokeWidth="2" strokeDasharray="2 1" /></Svg>
        <button aria-label="Close command line"><X size={15} strokeWidth={2} color="#d0d3d8" /></button>
        <button aria-label="Customize command line" className="ml-1"><Wrench size={17} fill="#d0d3d8" color="#d0d3d8" strokeWidth={1} /></button>
      </div>
      <label htmlFor="command" className="flex items-center gap-[3px] border-t border-[#6e6e6e] pl-1">
        <Svg w={19} h={15}><path d="M1 1h17v13H1z" stroke="#4a4a4a" strokeWidth="1.500" /><path d="M1 1h17v3H1z" fill="#4a4a4a" /><path d="M4 6l3 2-3 2M9 11h4" stroke="#4a4a4a" /></Svg>
        <Svg w={9} h={6}><path d="M0 0h9L4 5z" fill="#3d3d3d" /></Svg>
      </label>
      <input
        id="command"
        placeholder="Type a command"
        className="min-w-0 flex-1 border-t border-[#6e6e6e] bg-transparent px-[7px] font-['DejaVu_Sans_Mono','Liberation_Mono',monospace] text-[13px] italic text-[#333] placeholder-[#4a4a4a] outline-none"
      />
      <button aria-label="Recent commands" className="border-t border-[#6e6e6e] px-1"><Svg w={9} h={6}><path d="M0 5h8L4 0z" fill="#3d3d3d" /></Svg></button>
    </div>
  );
}

export default function App() {
  return (
    <div className="flex h-screen flex-col overflow-hidden bg-[#222933] font-['Open_Sans',sans-serif]">
      <TitleBar />
      <Ribbon />
      <FileTabs />
      <div className="flex min-h-0 flex-1">
        <Palette />
        <main className="flex min-w-0 flex-1 flex-col border-t-[5px] border-[#414651]">
          <div className="relative flex-1 overflow-hidden bg-black">
            <Drawing />
            <Ucs />
            <CommandLine />
          </div>
        </main>
      </div>
    </div>
  );
}
